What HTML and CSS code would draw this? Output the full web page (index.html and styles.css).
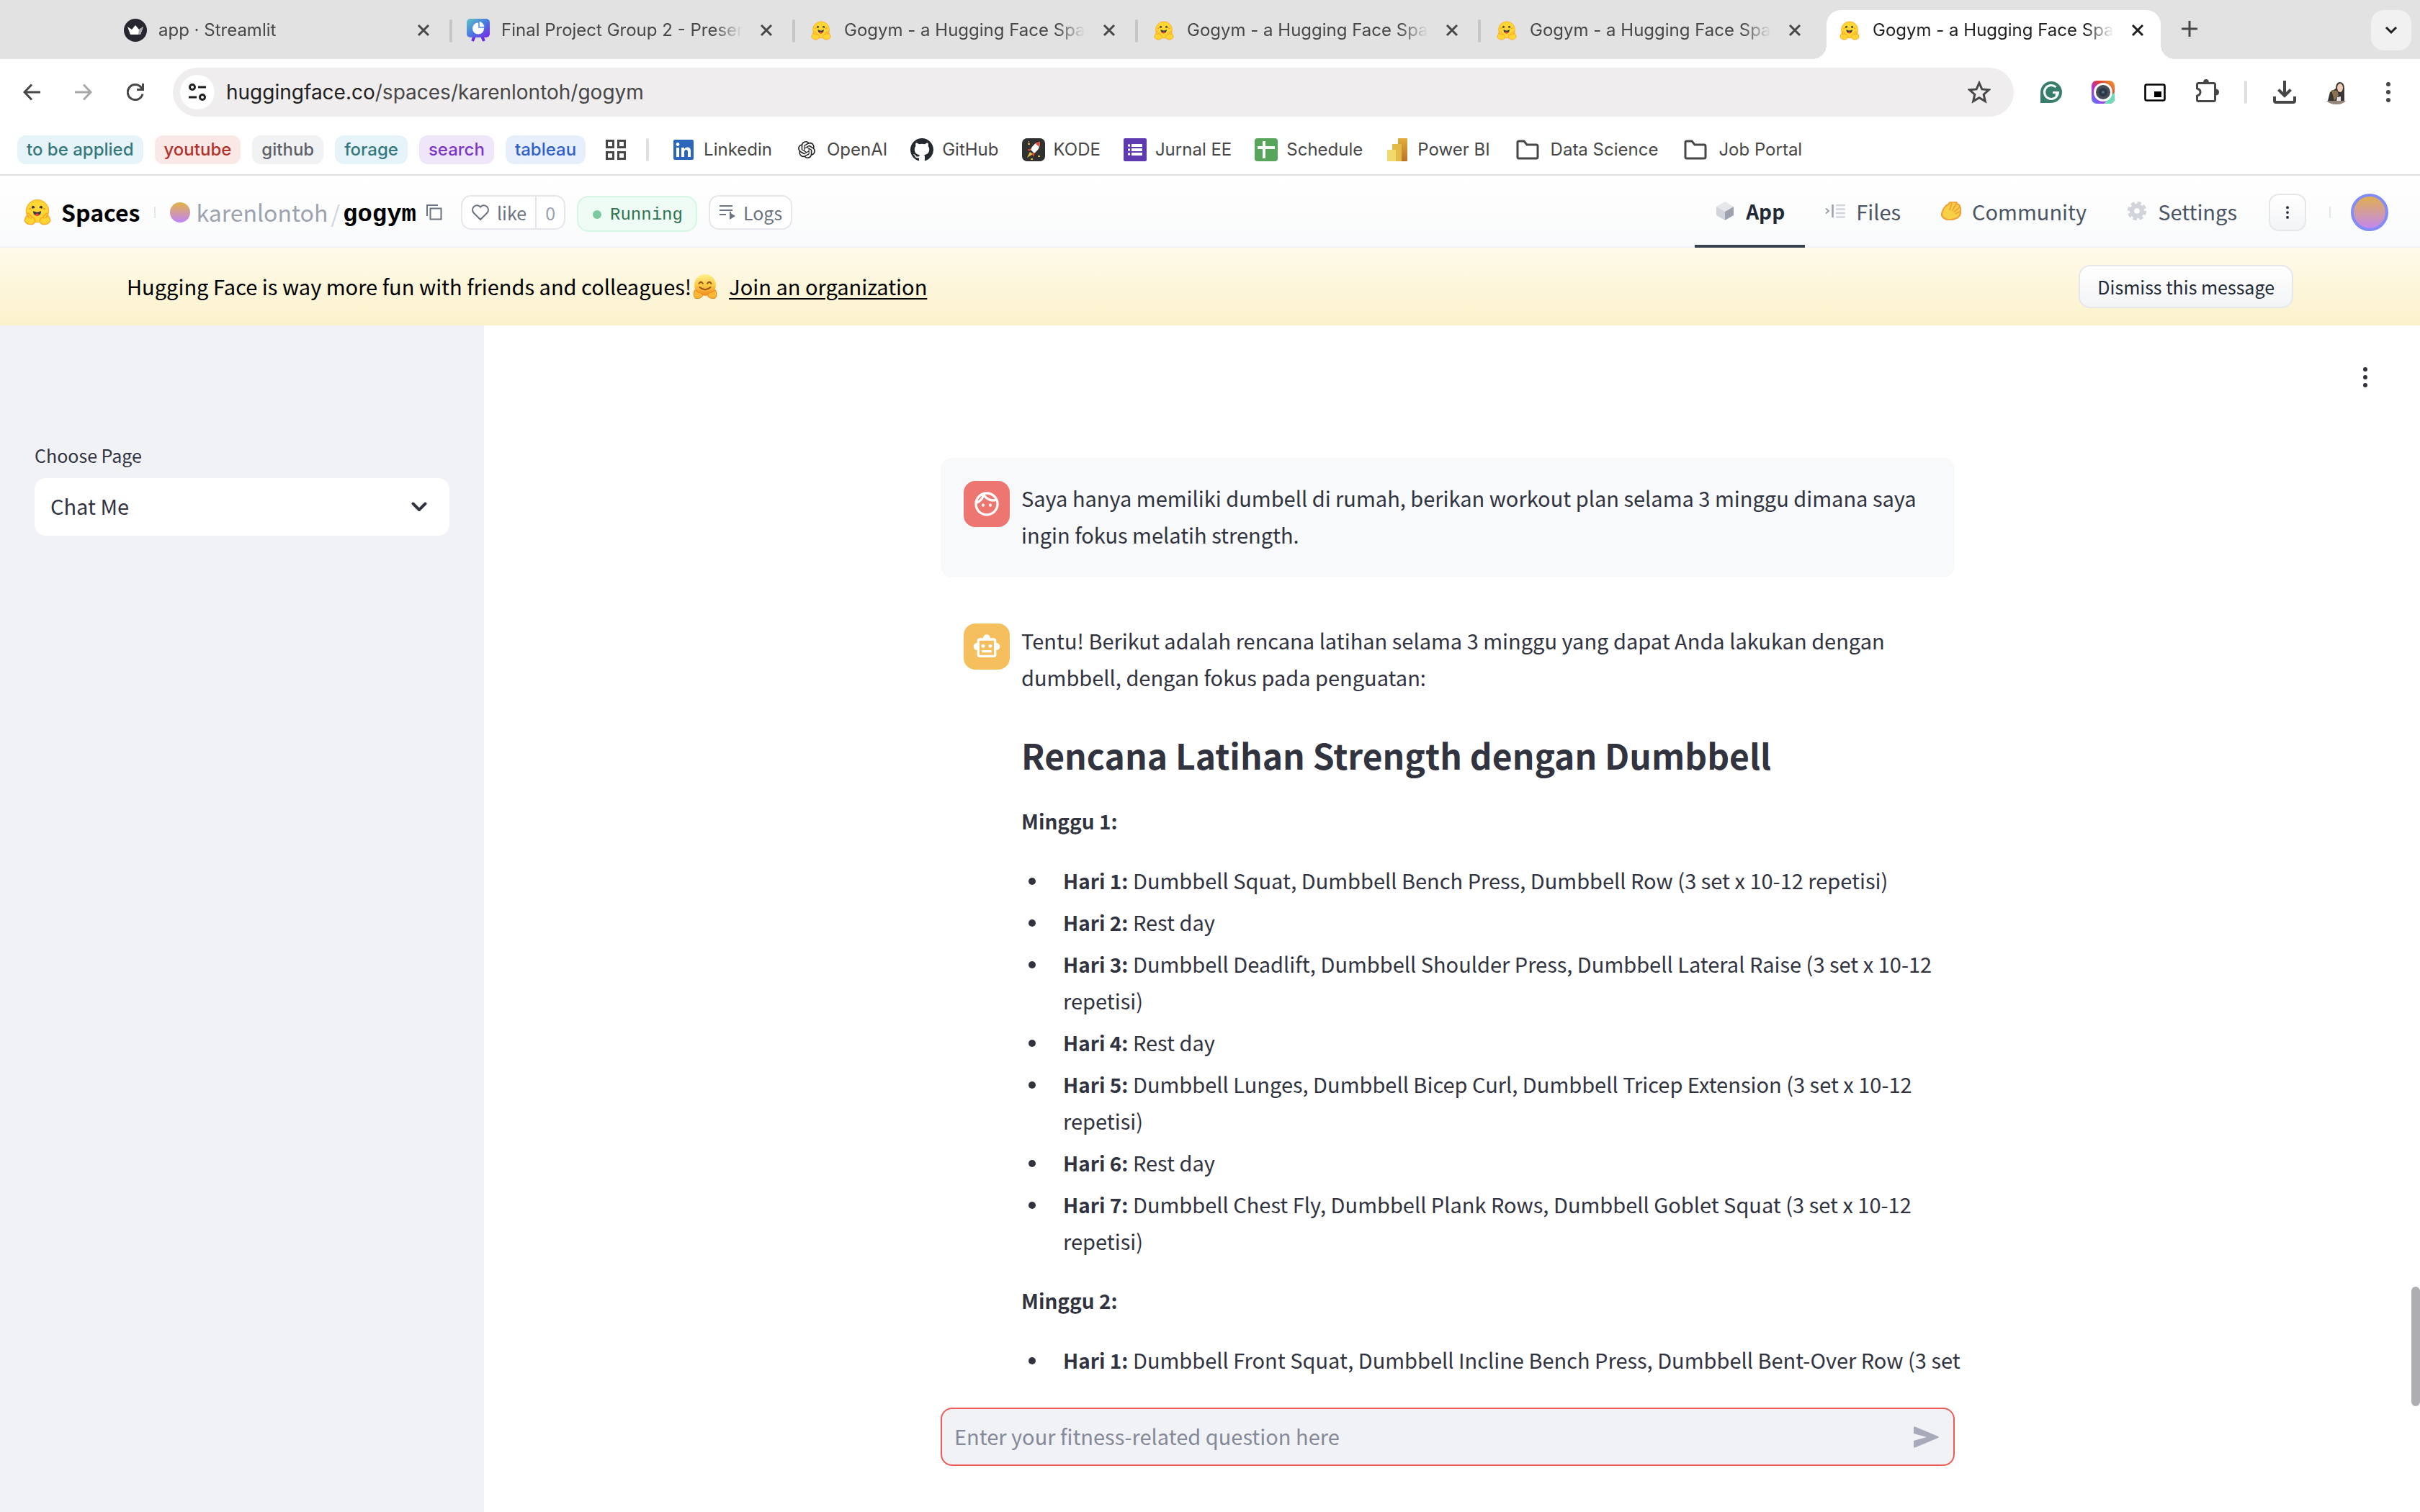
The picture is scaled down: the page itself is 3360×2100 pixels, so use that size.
FILE: index.html
```html
<!DOCTYPE html>
<html lang="en">
<head>
<meta charset="utf-8">
<meta name="viewport" content="width=device-width, initial-scale=1">
<title>Gogym - a Hugging Face Space</title>
<link rel="stylesheet" href="styles.css">
</head>
<body>
<svg class="sprite" aria-hidden="true">
  <defs>
    <linearGradient id="present" x1="0" y1="0" x2="1" y2="1"><stop offset="0" stop-color="#5cc4c4"/><stop offset=".5" stop-color="#4a7be0"/><stop offset="1" stop-color="#7a22e8"/></linearGradient>
    <linearGradient id="hug" x1="0" y1="0" x2="0" y2="1"><stop offset="0" stop-color="#fff08a"/><stop offset=".5" stop-color="#fccb45"/><stop offset="1" stop-color="#f08a1c"/></linearGradient>
    <linearGradient id="bi" x1="0" y1="0" x2="0" y2="1"><stop offset="0" stop-color="#e0ad3c"/><stop offset="1" stop-color="#b97326"/></linearGradient>
    <linearGradient id="lens" x1="0" y1="1" x2="1" y2="0"><stop offset="0" stop-color="#4a86f7"/><stop offset=".35" stop-color="#b32fe0"/><stop offset=".65" stop-color="#e23b2c"/><stop offset="1" stop-color="#efae38"/></linearGradient>
    <symbol id="hf" viewBox="6 0 84 88">
      <circle cx="48" cy="42" r="36" fill="#ffd634" stroke="#ffb02e" stroke-width="3"/>
      <path fill="#3a3b45" d="M58.5 32.3c1.28.44 1.78 3.06 3.07 2.38a5 5 0 1 0-6.76-2.07c.61 1.15 2.55-.72 3.7-.32ZM34.95 32.3c-1.28.44-1.79 3.06-3.07 2.38a5 5 0 1 1 6.76-2.07c-.61 1.15-2.56-.72-3.7-.32Z"/>
      <path fill="#3a3b45" d="M47 57c10 0 13-9 13-13.500 0-2.300-1.600-1.600-4.100-.4-2.300 1.200-5.400 2.800-8.900 2.800s-6.600-1.600-8.900-2.800c-2.500-1.200-4.100-1.900-4.100.4C34 48 37 57 47 57Z"/>
      <ellipse cx="47" cy="54" rx="6" ry="4" fill="#f94040"/>
      <circle cx="70" cy="35" r="3" fill="#ff9d0b"/><circle cx="24" cy="35" r="3" fill="#ff9d0b"/>
      <g fill="#ffd634" stroke="#ffa41e" stroke-width="3" stroke-linejoin="round">
        <path d="M18 49c4 0 5 4 6 8 2-3 6-1 5 3l-1 5c3-4 8-4 8 0l2 2c6 8 0 18-12 18-10 0-14-3-18-10-3-4 0-6 1-6-2-5 1-6 2-6-1-5 2-6 4-5l6 6-5-9c-1-3 0-6 2-6Z"/>
        <path d="M78 49c-4 0-5 4-6 8-2-3-6-1-5 3l1 5c-3-4-8-4-8 0l-2 2c-6 8 0 18 12 18 10 0 14-3 18-10 3-4 0-6-1-6 2-5-1-6-2-6 1-5-2-6-4-5l-6 6 5-9c1-3 0-6-2-6Z"/>
      </g>
    </symbol>
    <symbol id="x" viewBox="0 0 18 18"><path d="M2 2 16 16M16 2 2 16" fill="none" stroke="currentColor" stroke-width="3"/></symbol>
    <symbol id="folder" viewBox="0 0 32 28"><path d="M2 4q0-2 2-2h7l4 5h13q2 0 2 2v15q0 2-2 2H4q-2 0-2-2Z" fill="none" stroke="#474747" stroke-width="3"/></symbol>
    <symbol id="dots" viewBox="0 0 8 32"><circle cx="4" cy="5" r="3"/><circle cx="4" cy="16" r="3"/><circle cx="4" cy="27" r="3"/></symbol>
  </defs>
</svg>

<div class="tabs" role="tablist">
  <div class="tab">
    <svg class="i32" viewBox="0 0 32 32"><circle cx="16" cy="16" r="16" fill="#262730"/><path d="M5 11l6 4 5-6 5 6 6-4-4 11H9Z" fill="#fff"/><path d="M21 15l6-4-4 11h-3Z" fill="#aaa"/></svg>
    <span class="tab-title">app · Streamlit</span><button class="close" aria-label="Close tab"><svg><use href="#x"/></svg></button>
  </div>
  <div class="tab">
    <svg class="i32" viewBox="0 0 32 32"><path d="M11 24 8 31M21 24l3 7" stroke="#6a2be8" stroke-width="4"/><rect width="32" height="26" rx="5" fill="url(#present)"/><circle cx="16" cy="13.500" r="8" fill="#fff"/><path d="M17 3v9h8a9 9 0 0 0-8-9Z" fill="#fff" stroke="#4a8be0" stroke-width="1.500"/></svg>
    <span class="tab-title">Final Project Group 2 - Presentation</span><button class="close" aria-label="Close tab"><svg><use href="#x"/></svg></button>
  </div>
  <div class="tab"><svg class="fav"><use href="#hf"/></svg><span class="tab-title">Gogym - a Hugging Face Space</span><button class="close" aria-label="Close tab"><svg><use href="#x"/></svg></button></div>
  <div class="tab"><svg class="fav"><use href="#hf"/></svg><span class="tab-title">Gogym - a Hugging Face Space</span><button class="close" aria-label="Close tab"><svg><use href="#x"/></svg></button></div>
  <div class="tab last"><svg class="fav"><use href="#hf"/></svg><span class="tab-title">Gogym - a Hugging Face Space</span><button class="close" aria-label="Close tab"><svg><use href="#x"/></svg></button></div>
  <div class="tab active"><svg class="fav"><use href="#hf"/></svg><span class="tab-title">Gogym - a Hugging Face Space</span><button class="close" aria-label="Close tab"><svg><use href="#x"/></svg></button></div>
  <button class="new-tab" aria-label="New tab"><svg viewBox="0 0 22 22"><path d="M11 0v22M0 11h22" stroke="#474747" stroke-width="3"/></svg></button>
  <button class="tab-search" aria-label="Search tabs"><svg viewBox="0 0 18 12"><path d="M2 2l7 7 7-7" fill="none" stroke="#1f1f1f" stroke-width="3"/></svg></button>
</div>

<div class="toolbar">
  <nav class="history" aria-label="History">
    <button aria-label="Back"><svg viewBox="0 0 24 24"><path d="M24 12H3M12 1.500 2 12l10 10.500" fill="none" stroke="#474747" stroke-width="3"/></svg></button>
    <button aria-label="Forward"><svg viewBox="0 0 24 24"><path d="M0 12h21M12 1.500 22 12 12 22.500" fill="none" stroke="#a8a8a8" stroke-width="3"/></svg></button>
    <button aria-label="Reload"><svg viewBox="0 0 24 24"><path d="M22 14.500A10.500 10.500 0 1 1 20 5.500l2 2.500M22.500 0v8.500H14" fill="none" stroke="#474747" stroke-width="3"/></svg></button>
  </nav>
  <div class="omnibox">
    <button class="site" aria-label="Site information"><svg viewBox="0 0 26 24"><g fill="none" stroke="#1f1f1f" stroke-width="3"><circle cx="6" cy="5" r="3.500"/><path d="M14 5h11M1 19h11"/><circle cx="20" cy="19" r="3.500"/></g></svg></button>
    <span class="url"><b>huggingface.co</b>/spaces/karenlontoh/gogym</span>
    <button class="star" aria-label="Bookmark this page"><svg viewBox="0 0 30 30"><path d="M15 3l3.600 8.200 9 .8-6.800 6 2 8.800L15 22.200l-7.800 4.600 2-8.800-6.800-6 9-.8Z" fill="none" stroke="#474747" stroke-width="2.800"/></svg></button>
  </div>
  <div class="extensions">
    <button aria-label="Grammarly"><svg viewBox="0 0 32 32"><path d="M16 1a15 15 0 1 1 0 30H1V16A15 15 0 0 1 16 1Z" fill="#377f6c"/><path d="M22.500 9a9.500 9.500 0 1 0 3 7.500H18M25.500 16l-3 5" fill="none" stroke="#fff" stroke-width="3"/></svg></button>
    <button aria-label="Camera"><svg viewBox="0 0 32 32"><rect width="32" height="32" rx="7" fill="url(#lens)"/><path d="M17 32h8a7 7 0 0 0 7-7v-9Z" fill="#6edbb8"/><circle cx="16" cy="16" r="13" fill="#fff"/><circle cx="16" cy="16" r="10" fill="#444d58"/><circle cx="16" cy="16" r="6" fill="#2c3a48"/><circle cx="16" cy="16" r="2" fill="#4d7288"/></svg></button>
    <button aria-label="Picture in picture"><svg viewBox="0 0 32 32"><rect x="2.500" y="5.500" width="27" height="22" rx="2" fill="none" stroke="#000" stroke-width="2.600"/><rect x="15" y="15" width="10" height="8" fill="#000"/></svg></button>
    <button aria-label="Extensions"><svg class="puzzle" viewBox="0 0 32 32"><path d="M2.500 11V5.500q0-2 2-2h21q2 0 2 2v21q0 2-2 2h-21q-2 0-2-2V21q4.500-1 4.500-5t-4.500-5Z" fill="none" stroke="#474747" stroke-width="3" stroke-linejoin="round"/><path d="M11 3q0-5 4-5t4 5ZM28 11.500q5 0 5 4.500t-5 4.500Z" fill="#474747"/></svg></button>
  </div>
  <i class="rule"></i>
  <div class="extensions">
    <button aria-label="Downloads"><svg viewBox="0 0 32 32"><path d="M16 0v20M7.500 12.500 16 21l8.500-8.500M2 22v6q0 2 2 2h24q2 0 2-2v-6" fill="none" stroke="#474747" stroke-width="4"/></svg></button>
    <button aria-label="Profile"><svg viewBox="0 0 32 32"><path d="M20 2q7 0 7 9v17H4l3-12 8-5q0-8 5-9Z" fill="#3a3635"/><ellipse cx="21" cy="10" rx="4" ry="6" fill="#efcdb8"/><path d="M9 13l8 1 2 6-6 8Z" fill="#8a7350"/><path d="M17 23l5-1v7h-6Z" fill="#e8e6e4"/><path d="M2 28h27q-4 5-13 5T2 28Z" fill="#94857a"/></svg></button>
    <button aria-label="Menu"><svg class="dots" fill="#474747"><use href="#dots"/></svg></button>
  </div>
</div>

<nav class="bookmarks" aria-label="Bookmarks">
  <button class="chip teal">to be applied</button>
  <button class="chip red">youtube</button>
  <button class="chip grey">github</button>
  <button class="chip teal">forage</button>
  <button class="chip purple">search</button>
  <button class="chip blue">tableau</button>
  <button class="apps" aria-label="Apps"><svg viewBox="0 0 28 28"><g fill="none" stroke="#474747" stroke-width="3"><path d="M1.500 1.500h9v9h-9ZM17.500 1.500h9v9h-9ZM1.500 17.500h9v9h-9ZM17.500 17.500h9v9h-9Z"/></g></svg></button>
  <i class="rule"></i>
  <a href="#"><svg viewBox="0 0 32 32"><rect x="2" y="2" width="28" height="28" rx="2" fill="#2a66bc"/><path d="M6 13h4v13H6ZM13 13h4v2q1.500-2.400 4.500-2.400 4.500 0 4.500 5.400v8h-4v-7q0-3-2.300-3T17 19v7h-4Z" fill="#fff"/><circle cx="8" cy="8.500" r="2.400" fill="#fff"/></svg>Linkedin</a>
  <a href="#"><svg viewBox="-4 -4 32 32"><path fill="#222" d="M22.2819 9.8211a5.9847 5.9847 0 0 0-.5157-4.9108 6.0462 6.0462 0 0 0-6.5098-2.9A6.0651 6.0651 0 0 0 4.9807 4.1818a5.9847 5.9847 0 0 0-3.9977 2.9 6.0462 6.0462 0 0 0 .7427 7.0966 5.98 5.98 0 0 0 .511 4.9107 6.051 6.051 0 0 0 6.5146 2.9001A5.9847 5.9847 0 0 0 13.2599 24a6.0557 6.0557 0 0 0 5.7718-4.2058 5.9894 5.9894 0 0 0 3.9977-2.9001 6.0557 6.0557 0 0 0-.7475-7.0729zm-9.022 12.6081a4.4755 4.4755 0 0 1-2.8764-1.0408l.1419-.0804 4.7783-2.7582a.7948.7948 0 0 0 .3927-.6813v-6.7369l2.02 1.1686a.071.071 0 0 1 .038.052v5.5826a4.504 4.504 0 0 1-4.4945 4.4944zm-9.6607-4.1254a4.4708 4.4708 0 0 1-.5346-3.0137l.142.0852 4.783 2.7582a.7712.7712 0 0 0 .7806 0l5.8428-3.3685v2.3324a.0804.0804 0 0 1-.0332.0615L9.74 19.9502a4.4992 4.4992 0 0 1-6.1408-1.6464zM2.3408 7.8956a4.485 4.485 0 0 1 2.3655-1.9728V11.6a.7664.7664 0 0 0 .3879.6765l5.8144 3.3543-2.0201 1.1685a.0757.0757 0 0 1-.071 0l-4.8303-2.7865A4.504 4.504 0 0 1 2.3408 7.872zm16.5963 3.8558L13.1038 8.364 15.1192 7.2a.0757.0757 0 0 1 .071 0l4.8303 2.7913a4.4944 4.4944 0 0 1-.6765 8.1042v-5.6772a.79.79 0 0 0-.407-.667zm2.0107-3.0231l-.142-.0852-4.7735-2.7818a.7759.7759 0 0 0-.7854 0L9.409 9.2297V6.8974a.0662.0662 0 0 1 .0284-.0615l4.8303-2.7866a4.4992 4.4992 0 0 1 6.6802 4.66zM8.3065 12.863l-2.02-1.1638a.0804.0804 0 0 1-.038-.0567V6.0742a4.4992 4.4992 0 0 1 7.3757-3.4537l-.142.0805L8.704 5.459a.7948.7948 0 0 0-.3927.6813zm1.0976-2.3654l2.602-1.4998 2.6069 1.4998v2.9994l-2.5974 1.4997-2.6067-1.4997Z"/></svg>OpenAI</a>
  <a href="#"><svg viewBox="0 0 16 16"><path fill="#24292f" d="M8 0C3.580 0 0 3.580 0 8c0 3.540 2.290 6.530 5.470 7.590.4.07.55-.17.55-.38 0-.19-.01-.82-.01-1.490-2.010.37-2.530-.49-2.690-.94-.09-.23-.48-.94-.82-1.130-.28-.15-.68-.52-.01-.53.63-.01 1.080.58 1.230.82.72 1.210 1.870.87 2.330.66.07-.52.28-.87.51-1.070-1.780-.2-3.640-.89-3.640-3.950 0-.87.31-1.590.82-2.150-.08-.2-.36-1.020.08-2.120 0 0 .67-.21 2.200.82.64-.18 1.320-.27 2-.27s1.360.09 2 .27c1.530-1.040 2.200-.82 2.200-.82.44 1.100.16 1.920.08 2.120.51.56.82 1.270.82 2.150 0 3.070-1.870 3.750-3.650 3.950.29.25.54.73.54 1.480 0 1.070-.01 1.930-.01 2.200 0 .21.15.46.55.38A8.010 8.010 0 0 0 16 8c0-4.420-3.580-8-8-8Z"/></svg>GitHub</a>
  <a href="#"><svg viewBox="0 0 32 32"><rect width="32" height="32" rx="7" fill="#303030"/><path d="M25 5q-9 1-13 11l5 5Q26 14 25 5Z" fill="#fff"/><path d="M25 5q-4 0-6 3l5 4q1-3 1-7Z" fill="#e0483c"/><path d="M13 14l-6 2 4 2ZM18 20l-2 6-3-5Z" fill="#d9473b"/><path d="M11 19l4 3-8 5Z" fill="#e9c046"/><path d="M8 8h3M22 25h3M12 29h3M9 5h1" stroke="#d8b23b" stroke-width="2"/></svg>KODE</a>
  <a href="#"><svg viewBox="0 0 32 32"><rect width="32" height="32" rx="2" fill="#5f3bb0"/><path d="M11 10h15M11 16h15M11 22h15" stroke="#fff" stroke-width="4"/><path d="M6 10h3M6 16h3M6 22h3" stroke="#fff" stroke-width="3"/></svg>Jurnal EE</a>
  <a href="#"><svg viewBox="0 0 32 32"><rect width="32" height="32" rx="4" fill="#57a55b"/><path d="M13 4v24M4 13h24" stroke="#fff" stroke-width="4"/></svg>Schedule</a>
  <a href="#"><svg viewBox="0 0 32 32"><rect x="17" width="13" height="32" rx="1" fill="url(#bi)"/><rect x="9" y="8" width="13" height="24" rx="1" fill="#e3ba48"/><rect x="2" y="16" width="12" height="16" rx="1" fill="#f1da6c"/></svg>Power BI</a>
  <a class="folder" href="#"><svg><use href="#folder"/></svg>Data Science</a>
  <a class="folder" href="#"><svg><use href="#folder"/></svg>Job Portal</a>
</nav>

<header class="space-head">
  <a class="brand" href="#"><svg viewBox="0 0 38 38"><use href="#hf"/></svg>Spaces</a>
  <i class="tick"></i>
  <div class="crumbs"><i class="ball"></i><a class="owner" href="#">karenlontoh</a><span class="slash">/</span><a class="repo" href="#">gogym</a>
    <button class="copy" aria-label="Copy name"><svg viewBox="0 0 22 22"><path d="M5.500 5.500h15v15h-15ZM1 16V1h15" fill="none" stroke="#6b7280" stroke-width="2"/></svg></button></div>
  <div class="like"><button><svg viewBox="0 0 26 24"><path d="M13 22 3.500 12.500a6 6 0 0 1 9.500-8 6 6 0 0 1 9.500 8Z" fill="none" stroke="#6b7280" stroke-width="2"/></svg>like</button><button class="count">0</button></div>
  <div class="status"><i></i>Running</div>
  <button class="logs"><svg viewBox="0 0 24 24"><path d="M1 3h18M1 9h18M1 15h9M1 15h9" stroke="#6b7280" stroke-width="2"/><path d="M16 11v9" stroke="#6b7280" stroke-width="2"/><path d="M15 12l8 5-8 5Z" fill="#6b7280"/></svg>Logs</button>
  <nav class="menu" aria-label="Space">
    <a class="current" href="#"><svg viewBox="0 0 24 26"><path d="M12 0 24 7 12 14 0 7Z" fill="#e5e7eb"/><path d="M0 7l12 7v12L0 19Z" fill="#d1d5db"/><path d="M24 7 12 14v12l12-7Z" fill="#9ca3af"/></svg>App</a>
    <a href="#"><svg viewBox="0 0 28 22"><path d="M10.500 2v18" stroke="#9ca3af" stroke-width="2.600"/><path d="M1 7.500 5 11l-4 3.500" fill="none" stroke="#9ca3af" stroke-width="2"/><path d="M16 3h11M16 8.500h11M16 14h11M16 19.500h11" stroke="#d1d5db" stroke-width="2.400" stroke-linecap="round"/></svg>Files</a>
    <a href="#"><svg viewBox="0 0 30 28"><path d="M2 15Q5 6 11 4q2-4 5-3 2-2 4 0 4-1 4 3 4 0 4 4 2 2 1 6 1 9-9 12-9 3-15-1Q-1 22 2 15Z" fill="#f7d145" stroke="#f0a13c" stroke-width="2.400"/><path d="M16 3l-3 9M22 4l-5 9M27 9l-7 6M28 15l-6 3" stroke="#f0a13c" stroke-width="2" fill="none" stroke-linecap="round"/></svg>Community</a>
    <a href="#"><svg viewBox="0 0 24 24"><circle cx="12" cy="12" r="6.500" fill="none" stroke="#d1d5db" stroke-width="6"/><circle cx="12" cy="12" r="10.500" fill="none" stroke="#d1d5db" stroke-width="3.500" stroke-dasharray="5 3.250"/></svg>Settings</a>
  </nav>
  <button class="more" aria-label="More"><svg class="dots"><use href="#dots"/></svg></button>
  <i class="tick user-tick"></i>
  <button class="ball me" aria-label="Account"></button>
</header>

<section class="banner">
  <p>Hugging Face is way more fun with friends and colleagues!</p>
  <svg viewBox="0 0 32 32"><circle cx="16" cy="14" r="14" fill="url(#hug)"/><path d="M8 12q2.500-4 5 0M19 12q2.500-4 5 0M9 17q7 6 14 0" fill="none" stroke="#9a5518" stroke-width="2" stroke-linecap="round"/><path d="M2 22q0-2 2-1l4 3q6 0 4 5-4 4-9 2-3-3-1-9ZM30 22q0-2-2-1l-4 3q-6 0-4 5 4 4 9 2 3-3 1-9Z" fill="#fbb733" stroke="#e58a24"/></svg>
  <a href="#">Join an organization</a>
  <button>Dismiss this message</button>
</section>

<div class="app">
  <aside>
    <label for="page">Choose Page</label>
    <div class="select"><select id="page"><option>Chat Me</option></select><svg viewBox="0 0 22 14"><path d="M2.500 2.500 11 11l8.500-8.500" fill="none" stroke="#31333f" stroke-width="4" stroke-linecap="round" stroke-linejoin="round"/></svg></div>
  </aside>
  <main>
    <div class="top"><button aria-label="Main menu"><svg class="dots"><use href="#dots"/></svg></button></div>
    <div class="chat">
      <article class="message user">
        <div class="avatar"><svg viewBox="0 0 24 24" fill="#fff"><path d="M10.250 13a1.250 1.250 0 11-2.500 0 1.250 1.250 0 012.500 0zM15 11.750a1.250 1.250 0 100 2.500 1.250 1.250 0 000-2.500zm7 .25c0 5.520-4.480 10-10 10S2 17.520 2 12 6.480 2 12 2s10 4.480 10 10zM10.660 4.120C12.060 6.440 14.600 8 17.500 8c.46 0 .91-.05 1.340-.12C17.440 5.560 14.900 4 12 4c-.46 0-.91.05-1.340.12zM4.420 9.470a8.046 8.046 0 003.660-4.440 8.046 8.046 0 00-3.660 4.440zM20 12c0-.78-.12-1.530-.33-2.240-.7.15-1.420.24-2.170.24a10 10 0 01-7.760-3.690A10.016 10.016 0 014 11.860c.01.04 0 .09 0 .14 0 4.410 3.590 8 8 8s8-3.590 8-8z"/></svg></div>
        <div class="text"><p>Saya hanya memiliki dumbell di rumah, berikan workout plan selama 3 minggu dimana saya ingin fokus melatih strength.</p></div>
      </article>
      <article class="message bot">
        <div class="avatar"><svg viewBox="0 0 24 24" fill="#fff"><path d="M20 9V7c0-1.100-.9-2-2-2h-3c0-1.660-1.340-3-3-3S9 3.340 9 5H6c-1.100 0-2 .9-2 2v2c-1.660 0-3 1.340-3 3s1.340 3 3 3v4c0 1.100.9 2 2 2h12c1.100 0 2-.9 2-2v-4c1.660 0 3-1.340 3-3s-1.340-3-3-3zm-2 10H6V7h12v12zm-9-6c-.83 0-1.500-.67-1.500-1.500S8.170 10 9 10s1.500.67 1.500 1.500S9.830 13 9 13zm7.500-1.500c0 .83-.67 1.500-1.500 1.500s-1.500-.67-1.500-1.500.67-1.500 1.500-1.500 1.500.67 1.500 1.500zM8 15h8v2H8v-2z"/></svg></div>
        <div class="text">
          <p>Tentu! Berikut adalah rencana latihan selama 3 minggu yang dapat Anda lakukan dengan dumbbell, dengan fokus pada penguatan:</p>
          <h1>Rencana Latihan Strength dengan Dumbbell</h1>
          <p><strong>Minggu 1:</strong></p>
          <ul>
            <li><strong>Hari 1:</strong> Dumbbell Squat, Dumbbell Bench Press, Dumbbell Row (3 set x 10-12 repetisi)</li>
            <li><strong>Hari 2:</strong> Rest day</li>
            <li><strong>Hari 3:</strong> Dumbbell Deadlift, Dumbbell Shoulder Press, Dumbbell Lateral Raise (3 set x 10-12 repetisi)</li>
            <li><strong>Hari 4:</strong> Rest day</li>
            <li><strong>Hari 5:</strong> Dumbbell Lunges, Dumbbell Bicep Curl, Dumbbell Tricep Extension (3 set x 10-12 repetisi)</li>
            <li><strong>Hari 6:</strong> Rest day</li>
            <li><strong>Hari 7:</strong> Dumbbell Chest Fly, Dumbbell Plank Rows, Dumbbell Goblet Squat (3 set x 10-12 repetisi)</li>
          </ul>
          <p><strong>Minggu 2:</strong></p>
          <ul>
            <li><strong>Hari 1:</strong> Dumbbell Front Squat, Dumbbell Incline Bench Press, Dumbbell Bent-Over Row (3 set</li>
          </ul>
        </div>
      </article>
    </div>
    <form class="ask">
      <input type="text" aria-label="Question" placeholder="Enter your fitness-related question here">
      <button type="button" aria-label="Send"><svg viewBox="0 0 36 30"><path d="M1 1.500Q1 0 3 .6L35 14q1.500 1 0 2L3 29.400Q1 30 1 28.500V20l18-5L1 10Z" fill="#a7aab9"/></svg></button>
    </form>
    <i class="thumb"></i>
  </main>
</div>
</body>
</html>
```
FILE: styles.css
```css
* { box-sizing: border-box; }
body {
  margin: 0;
  min-height: 100vh;
  display: flex;
  flex-direction: column;
  background: #fff;
  color: #31333f;
  font-family: "Noto Sans CJK SC", sans-serif;
  font-size: 29px;
}
button, input, select { font: inherit; color: inherit; border: 0; padding: 0; background: none; }
button { display: flex; align-items: center; justify-content: center; flex: none; }
a { color: inherit; text-decoration: none; }
svg { flex: none; }
p, h1, ul { margin: 0; }
.sprite { position: absolute; width: 0; height: 0; }
.dots { width: 8px; height: 32px; }
.rule { width: 4px; height: 32px; border-radius: 2px; background: #dfdfdf; flex: none; }

/* browser tabs */
.tabs, .toolbar, .bookmarks { font-family: Inter, sans-serif; color: #474747; }
.tabs { display: flex; align-items: flex-end; height: 82px; padding: 0 12px 0 150px; background: #e2e2e2; font-size: 24px; }
.tab { position: relative; display: flex; align-items: center; flex: 0 1 476px; min-width: 0; height: 68px; padding: 0 29px 12px 22px; }
.tab:not(.last):not(.active)::after { content: ""; position: absolute; right: -2px; top: 13px; width: 4px; height: 32px; border-radius: 2px; background: #c6c6c6; }
.i32 { width: 32px; height: 32px; }
.fav { width: 28px; height: 28px; margin: 0 2px; }
.tab-title { flex: 1; min-width: 0; margin: 0 24px 0 16px; line-height: 32px; white-space: nowrap; overflow: hidden; -webkit-mask-image: linear-gradient(to right, #000 88%, transparent); mask-image: linear-gradient(to right, #000 88%, transparent); }
.close svg { width: 18px; height: 18px; }
.active { background: #fff; color: #1f1f1f; border-radius: 20px 20px 0 0; flex-basis: 464px; margin: 0 6px; padding: 0 23px 12px 16px; }
.active::before, .active::after { content: ""; position: absolute; bottom: 0; width: 20px; height: 20px; }
.active::before { left: -20px; background: radial-gradient(circle at 0 0, #e2e2e2 20px, #fff 20px); }
.active::after { right: -20px; background: radial-gradient(circle at 100% 0, #e2e2e2 20px, #fff 20px); }
.new-tab { width: 56px; height: 56px; margin: 0 0 14px 6px; }
.new-tab svg { width: 22px; height: 22px; }
.tab-search { width: 56px; height: 56px; margin: 0 0 12px auto; border-radius: 18px; background: #f1f1f1; }
.tab-search svg { width: 18px; height: 12px; }

/* address bar */
.toolbar { display: flex; align-items: center; gap: 36px; height: 92px; padding: 0 28px; background: #fff; }
.history { display: flex; gap: 48px; padding: 0 4px; }
.history svg { width: 24px; height: 24px; }
.omnibox { flex: 1; display: flex; align-items: center; height: 68px; padding: 0 32px 0 10px; border-radius: 34px; background: #efedee; }
.site { width: 48px; height: 48px; border-radius: 24px; background: #fff; }
.site svg { width: 26px; height: 24px; }
.url { flex: 1; margin-left: 16px; font-size: 28px; line-height: 40px; }
.url b { font-weight: 400; color: #1f1f1f; }
.star svg { width: 32px; height: 32px; }
.extensions { display: flex; gap: 40px; }
.extensions button { width: 32px; }
.extensions svg { height: 32px; overflow: visible; }
.extensions svg:not(.dots) { width: 32px; }

/* bookmarks */
.bookmarks { display: flex; align-items: center; gap: 16px; height: 70px; padding: 0 24px; border-bottom: 2px solid #e0e0e0; font-size: 24px; line-height: 32px; }
.chip { height: 40px; padding: 0 13px; border-radius: 12px; font-weight: 500; }
.teal { background: #e6f4f9; color: #35797c; }
.red { background: #f9e8e6; color: #b3312a; }
.grey { background: #f1f2f4; color: #5f6268; }
.purple { background: #f0e6fa; color: #7a37c8; }
.blue { background: #e7effc; color: #2e61cc; }
.apps { margin: 0 12px; }
.apps svg { width: 28px; height: 28px; }
.bookmarks a { display: flex; align-items: center; gap: 12px; margin-left: 16px; white-space: nowrap; }
.bookmarks a svg { width: 32px; height: 32px; }
.bookmarks .folder { gap: 16px; margin-left: 20px; }

/* space header */
.space-head { display: flex; align-items: center; height: 100px; padding: 4px 44px 0 32px; border-bottom: 2px solid #eff2f6; background: linear-gradient(#fff, #f9fafb); color: #6b7280; }
.brand { display: flex; align-items: center; gap: 13px; color: #000; font-size: 32px; font-weight: 700; }
.brand svg { width: 40px; height: 38px; }
.tick { width: 2px; height: 16px; background: #e5e7eb; margin: 0 20px; }
.crumbs { display: flex; align-items: center; font-size: 32px; }
.brand, .owner { padding-bottom: 2px; }
.ball { width: 28px; height: 28px; border-radius: 50%; background: linear-gradient(#e3b341, #c084fc); }
.owner { margin-left: 8px; color: #9ca3af; }
.slash { margin: 0 4px; color: #d1d5db; }
.repo { padding-top: 6px; color: #000; font: 700 34px "Liberation Mono", monospace; }
.copy { margin-left: 14px; }
.copy svg { width: 22px; height: 22px; }
.like, .logs { display: flex; align-items: center; height: 48px; border: 2px solid #e5e7eb; border-radius: 14px; background: #fff; font-size: 25px; }
.like { margin-left: 26px; }
.like button { height: 44px; gap: 10px; padding: 0 12px; }
.like svg { width: 26px; height: 24px; }
.like .count { border-left: 2px solid #e5e7eb; color: #9ca3af; }
.status { display: flex; align-items: center; gap: 12px; height: 50px; margin: 4px 16px 0; padding: 2px 18px 0 20px; border: 2px solid #d5f7e4; border-radius: 16px; background: #effcf5; color: #2f7350; font: 24px "Liberation Mono", monospace; }
.status i { width: 12px; height: 12px; border-radius: 50%; background: #7cc9a0; }
.logs { gap: 10px; padding: 0 12px; }
.logs svg { width: 24px; height: 24px; }
.menu { display: flex; align-self: stretch; margin: 0 16px -2px auto; color: #4b5563; }
.menu a { display: flex; align-items: center; gap: 15px; padding: 0 28px 2px; border-bottom: 4px solid transparent; }
.menu a.current { border-bottom-color: #374151; color: #1f2937; font-size: 28px; font-weight: 700; }
.menu svg { width: 28px; height: 26px; }
.more { width: 52px; height: 52px; border: 2px solid #e5e7eb; border-radius: 14px; background: linear-gradient(#fff, #f3f4f6); fill: #1f2937; }
.more .dots { width: 6px; height: 20px; }
.user-tick { margin: 0 28px 0 32px; }
.me { width: 52px; height: 52px; border: 4px solid #818cf8; background-origin: border-box; }

.banner { display: flex; align-items: center; height: 108px; padding: 0 176px; background: linear-gradient(#fffbeb, #fbf1cb); color: #000; line-height: 40px; }
.banner p, .banner > a { padding-bottom: 2px; }
.banner svg { width: 34px; height: 34px; margin: 0 16px 0 2px; }
.banner a { text-decoration: underline; text-decoration-thickness: 2px; text-underline-offset: 4px; }
.banner button { height: 60px; margin-left: auto; padding: 0 24px; border: 2px solid #e5e7eb; border-radius: 16px; background: linear-gradient(#fff, #f3f4f6); color: #1f2937; font-size: 25px; }

/* app */
.app { flex: 1; display: grid; grid-template-columns: 672px 1fr; }
aside { padding: 160px 48px 0; background: #f0f2f6; }
aside label { display: block; font-size: 25px; line-height: 40px; margin-bottom: 12px; }
.select { display: grid; align-items: center; }
.select > * { grid-area: 1 / 1; }
.select select { appearance: none; width: 100%; height: 80px; padding: 0 22px 4px; border-radius: 16px; background: #fff; }
.select svg { width: 22px; height: 14px; justify-self: end; margin-right: 31px; pointer-events: none; }
main { position: relative; display: flex; flex-direction: column; padding-right: 12px; }
.top { display: flex; justify-content: flex-end; height: 184px; padding: 56px 60px 0 0; }
.top button { height: 32px; fill: #31333f; }
.chat, .ask { width: calc(100% - 64px); max-width: 1408px; margin: 0 auto; }
.message { display: flex; gap: 16px; padding: 32px; border-radius: 16px; line-height: 51px; }
.user { background: #f8f9fb; min-height: 166px; margin-bottom: 32px; }
.bot { margin-right: -24px; padding: 32px 0 0 32px; }
.avatar { flex: none; display: flex; align-items: center; justify-content: center; width: 64px; height: 64px; border-radius: 16px; background: #ed7671; }
.bot .avatar { background: #f5bf5e; }
.avatar svg { width: 40px; height: 40px; }
.text { flex: 1; margin-top: -2px; }
.text strong { font-size: 28px; line-height: 40px; }
h1 { font-size: 48px; line-height: 68px; font-weight: 700; margin: 48px 0 32px; }
.text ul { margin: 32px 0 31px; padding: 0 0 0 58px; list-style: none; }
.text ul:last-child { margin-bottom: 0; }
.text li::before { content: ""; float: left; width: 10px; height: 10px; margin: 22px 0 0 -48px; border-radius: 50%; background: #31333f; }
.text li + li { margin-top: 7px; }
.ask { display: flex; align-items: center; height: 81px; margin-top: auto; margin-bottom: 64px; padding: 0 20px 0 17px; border: 2px solid #ee5b56; border-radius: 16px; background: #f0f2f6; }
.ask input { flex: 1; min-width: 0; height: 60px; padding-bottom: 4px; }
.ask input::placeholder { color: #868998; opacity: 1; }
.ask svg { width: 36px; height: 30px; }
.thumb { position: absolute; right: 0; bottom: 147px; width: 12px; height: 166px; border-radius: 6px; background: #aeadb2; }
```
